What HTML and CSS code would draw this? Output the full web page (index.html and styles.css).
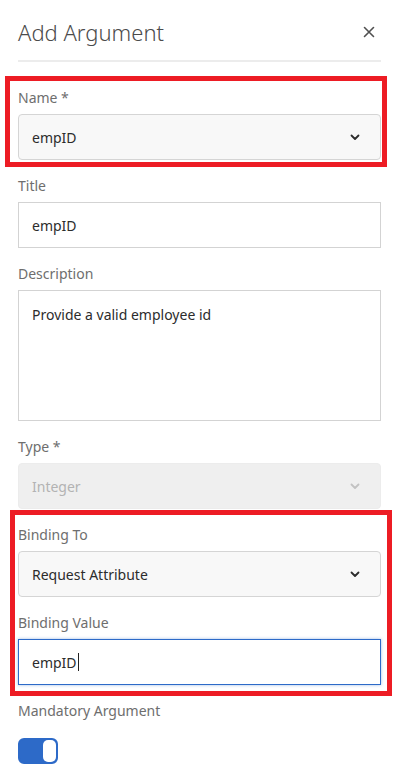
FILE: index.html
```html
<!DOCTYPE html>
<html lang="en">
<head>
  <meta charset="UTF-8" />
  <meta name="viewport" content="width=device-width, initial-scale=1.0"/>
  <title>Add Argument</title>
  <link rel="stylesheet" href="styles.css">
</head>
<body>

  <div class="dialog">
    <div class="dialog-header">
      <h1>Add Argument</h1>
      <svg class="close" width="12" height="12" viewBox="0 0 12 12">
        <path d="M1.5 1.5 L10.5 10.5 M10.5 1.5 L1.5 10.5" stroke="#505050" stroke-width="1.6" stroke-linecap="round"/>
      </svg>
    </div>

    <div class="highlight hl-name">
      <div class="field last">
        <div class="label">Name *</div>
        <div class="box select">
          <span>empID</span>
          <svg class="chevron" width="10" height="7" viewBox="0 0 10 7">
            <path d="M1.5 1.5 L5 5 L8.5 1.5" fill="none" stroke="#2c2c2c" stroke-width="1.8" stroke-linecap="round" stroke-linejoin="round"/>
          </svg>
        </div>
      </div>
    </div>

    <div class="field">
      <div class="label">Title</div>
      <div class="box">empID</div>
    </div>

    <div class="field">
      <div class="label">Description</div>
      <div class="box textarea">Provide a valid employee id</div>
    </div>

    <div class="field">
      <div class="label">Type *</div>
      <div class="box select disabled">
        <span>Integer</span>
        <svg class="chevron" width="10" height="7" viewBox="0 0 10 7">
          <path d="M1.5 1.5 L5 5 L8.5 1.5" fill="none" stroke="#c2c2c2" stroke-width="1.8" stroke-linecap="round" stroke-linejoin="round"/>
        </svg>
      </div>
    </div>

    <div class="highlight hl-binding">
      <div class="field">
        <div class="label">Binding To</div>
        <div class="box select">
          <span>Request Attribute</span>
          <svg class="chevron" width="10" height="7" viewBox="0 0 10 7">
            <path d="M1.5 1.5 L5 5 L8.5 1.5" fill="none" stroke="#2c2c2c" stroke-width="1.8" stroke-linecap="round" stroke-linejoin="round"/>
          </svg>
        </div>
      </div>
      <div class="field last">
        <div class="label">Binding Value</div>
        <div class="box focused">empID<span class="caret"></span></div>
      </div>
    </div>

    <div class="field">
      <div class="label">Mandatory Argument</div>
      <div class="toggle"><div class="knob"></div></div>
    </div>
  </div>

</body>
</html>
```

FILE: styles.css
```css
body {
  margin: 0;
  background: #fff;
  font-family: 'Noto Sans', 'Open Sans', sans-serif;
  color: #2c2c2c;
}
.dialog {
  padding: 16px 16px 0 18px;
}
.dialog-header {
  display: flex;
  align-items: center;
  justify-content: space-between;
  padding-bottom: 12px;
  border-bottom: 2px solid #ececec;
  margin-bottom: 26px;
}
.dialog-header h1 {
  margin: 0;
  font-size: 22px;
  font-weight: 300;
  line-height: 32px;
  color: #4b4b4b;
}
.close {
  margin-right: 6px;
}
.field {
  margin-bottom: 16px;
}
.field.last {
  margin-bottom: 0;
}
.label {
  font-size: 14px;
  line-height: 20px;
  color: #6e6e6e;
  margin-bottom: 6px;
}
.box {
  height: 46px;
  box-sizing: border-box;
  border: 1px solid #d3d3d3;
  background: #fff;
  padding: 0 13px;
  display: flex;
  align-items: center;
  font-size: 14px;
  color: #2c2c2c;
}
.select {
  justify-content: space-between;
  background: #f8f8f8;
  border-color: #d5d5d5;
  border-radius: 4px;
  padding-right: 20px;
}
.select.disabled {
  background: #efefef;
  border-color: #ececec;
  color: #b3b3b3;
}
.textarea {
  height: 131px;
  align-items: flex-start;
  padding-top: 14px;
}
.focused {
  border: 1px solid #2d6ac8;
  box-shadow: 0 0 3px rgba(45, 106, 200, 0.45);
}
.caret {
  display: inline-block;
  width: 1px;
  height: 18px;
  background: #222;
  margin-left: 1px;
}
.highlight {
  position: relative;
  margin-bottom: 16px;
}
.highlight::after {
  content: "";
  position: absolute;
  border: 5px solid #ed1c24;
  pointer-events: none;
}
.hl-name::after {
  left: -13px;
  right: -6px;
  top: -12px;
  bottom: -7px;
}
.hl-binding::after {
  left: -8px;
  right: -11px;
  top: -15px;
  bottom: -11px;
}
.toggle {
  margin-top: 17px;
  width: 40px;
  height: 26px;
  box-sizing: border-box;
  border-radius: 6px;
  background: #2d6ac8;
  border: 2px solid #2d6ac8;
  display: flex;
  justify-content: flex-end;
}
.knob {
  width: 13px;
  height: 100%;
  background: #fff;
  border-radius: 5px;
}
```
